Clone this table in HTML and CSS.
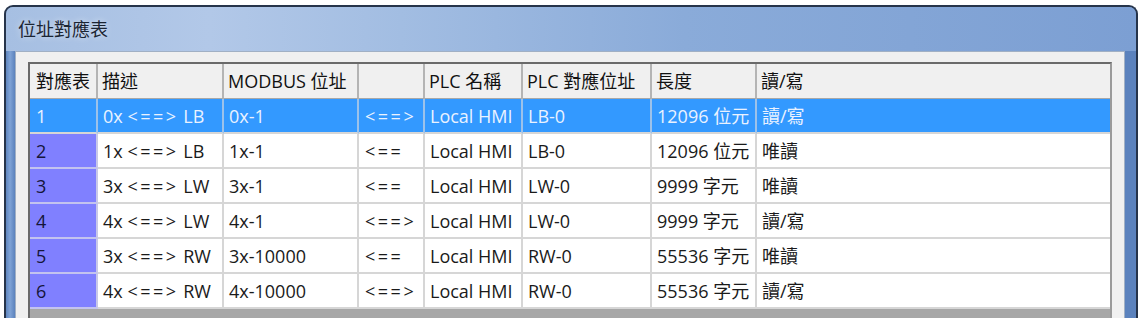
FILE: index.html
```html
<!DOCTYPE html>
<html lang="zh-Hant">
<head>
<meta charset="utf-8">
<title>位址對應表</title>
<link rel="stylesheet" href="styles.css">
</head>
<body>
<div class="window">
  <div class="titlebar"><span class="title">位址對應表</span></div>
  <div class="frame-body">
    <div class="panel">
      <div class="table">
        <div class="row head">
          <div class="cell first">對應表</div>
          <div class="cell">描述</div>
          <div class="cell">MODBUS 位址</div>
          <div class="cell"></div>
          <div class="cell">PLC 名稱</div>
          <div class="cell">PLC 對應位址</div>
          <div class="cell">長度</div>
          <div class="cell last">讀/寫</div>
        </div>
        <div class="row selected">
          <div class="cell idx">1</div>
          <div class="cell">0x <span class="arr">&lt;==&gt;</span> LB</div>
          <div class="cell">0x-1</div>
          <div class="cell arr">&lt;==&gt;</div>
          <div class="cell">Local HMI</div>
          <div class="cell">LB-0</div>
          <div class="cell">12096 位元</div>
          <div class="cell last">讀/寫</div>
        </div>
        <div class="row">
          <div class="cell idx">2</div>
          <div class="cell">1x <span class="arr">&lt;==&gt;</span> LB</div>
          <div class="cell">1x-1</div>
          <div class="cell arr">&lt;==</div>
          <div class="cell">Local HMI</div>
          <div class="cell">LB-0</div>
          <div class="cell">12096 位元</div>
          <div class="cell last">唯讀</div>
        </div>
        <div class="row">
          <div class="cell idx">3</div>
          <div class="cell">3x <span class="arr">&lt;==&gt;</span> LW</div>
          <div class="cell">3x-1</div>
          <div class="cell arr">&lt;==</div>
          <div class="cell">Local HMI</div>
          <div class="cell">LW-0</div>
          <div class="cell">9999 字元</div>
          <div class="cell last">唯讀</div>
        </div>
        <div class="row">
          <div class="cell idx">4</div>
          <div class="cell">4x <span class="arr">&lt;==&gt;</span> LW</div>
          <div class="cell">4x-1</div>
          <div class="cell arr">&lt;==&gt;</div>
          <div class="cell">Local HMI</div>
          <div class="cell">LW-0</div>
          <div class="cell">9999 字元</div>
          <div class="cell last">讀/寫</div>
        </div>
        <div class="row">
          <div class="cell idx">5</div>
          <div class="cell">3x <span class="arr">&lt;==&gt;</span> RW</div>
          <div class="cell">3x-10000</div>
          <div class="cell arr">&lt;==</div>
          <div class="cell">Local HMI</div>
          <div class="cell">RW-0</div>
          <div class="cell">55536 字元</div>
          <div class="cell last">唯讀</div>
        </div>
        <div class="row">
          <div class="cell idx">6</div>
          <div class="cell">4x <span class="arr">&lt;==&gt;</span> RW</div>
          <div class="cell">4x-10000</div>
          <div class="cell arr">&lt;==&gt;</div>
          <div class="cell">Local HMI</div>
          <div class="cell">RW-0</div>
          <div class="cell">55536 字元</div>
          <div class="cell last">讀/寫</div>
        </div>
        <div class="hscroll"></div>
      </div>
    </div>
  </div>
</div>
</body>
</html>
```

FILE: styles.css
```css
html, body {
  margin: 0;
  padding: 0;
  background: #ffffff;
}
body {
  font-family: "Open Sans", "Noto Sans CJK TC", sans-serif;
  font-size: 18px;
  color: #1a1a1a;
  overflow: hidden;
}
.window {
  box-sizing: border-box;
  margin: 5px 0 0 4px;
  width: 1134px;
  height: 313px;
  border: 2px solid #26344a;
  border-bottom: none;
  border-radius: 9px 9px 0 0;
  overflow: hidden;
  background: #6e93c8;
  display: flex;
  flex-direction: column;
}
.titlebar {
  height: 44px;
  flex: none;
  box-sizing: border-box;
  padding: 10px 0 0 12px;
  background: linear-gradient(90deg, #a6bfe2 0%, #b2c8e8 18%, #a2bde2 35%, #8aabd9 60%, #7c9fd3 100%);
}
.title {
  line-height: 24px;
  color: #1b2533;
  text-shadow: 0 0 6px rgba(255,255,255,0.6);
}
.frame-body {
  flex: 1;
  display: flex;
  padding: 0 11px 0 9px;
  background: linear-gradient(90deg, #5f86bf 0px, #7fa3d6 4px, #5b82bd 9px);
}
.panel {
  flex: 1;
  box-sizing: border-box;
  border: 1px solid #a1b0c4;
  border-bottom: none;
  background: #f0f0f0;
  padding: 10px 12px 0 12px;
}
.table {
  border: 2px solid #8c8c8c;
  border-color: #6a6a6a #9a9a9a #9a9a9a #6a6a6a;
  border-bottom: none;
  background: #ffffff;
  height: 260px;
  overflow: hidden;
}
.row {
  display: grid;
  grid-template-columns: 68px 126px 135px 66px 98px 129px 105px 353px;
  height: 35px;
}
.cell {
  box-sizing: border-box;
  height: 35px;
  padding: 2px 0 0 5px;
  line-height: 31px;
  border-right: 2px solid #d6d6d6;
  border-bottom: 2px solid #d6d6d6;
  white-space: pre;
  overflow: hidden;
}
.cell.last {
  border-right: none;
}
.head .cell {
  background: #f0f0f0;
  border-right: 2px solid #b4b4b4;
  border-bottom: 1px solid #a8a8a8;
  color: #111111;
  padding: 0 0 0 4px;
  line-height: 34px;
}
.head .cell.first {
  padding-left: 6px;
}
.head .cell.last {
  border-right: none;
}
.idx {
  background: #8080ff;
  border-bottom-color: #c3c3ef;
  border-right-color: #c8c8e8;
  padding-left: 6px;
  color: #15153a;
}
.selected .cell {
  background: #3399ff;
  color: #eaf2ff;
  border-right-color: #9cc2ea;
  border-bottom-color: #d6d6d6;
}
.arr {
  letter-spacing: 2.5px;
}
.cell.arr {
  padding-left: 6px;
}
.hscroll {
  height: 12px;
  background: #a7a7a7;
}
```
